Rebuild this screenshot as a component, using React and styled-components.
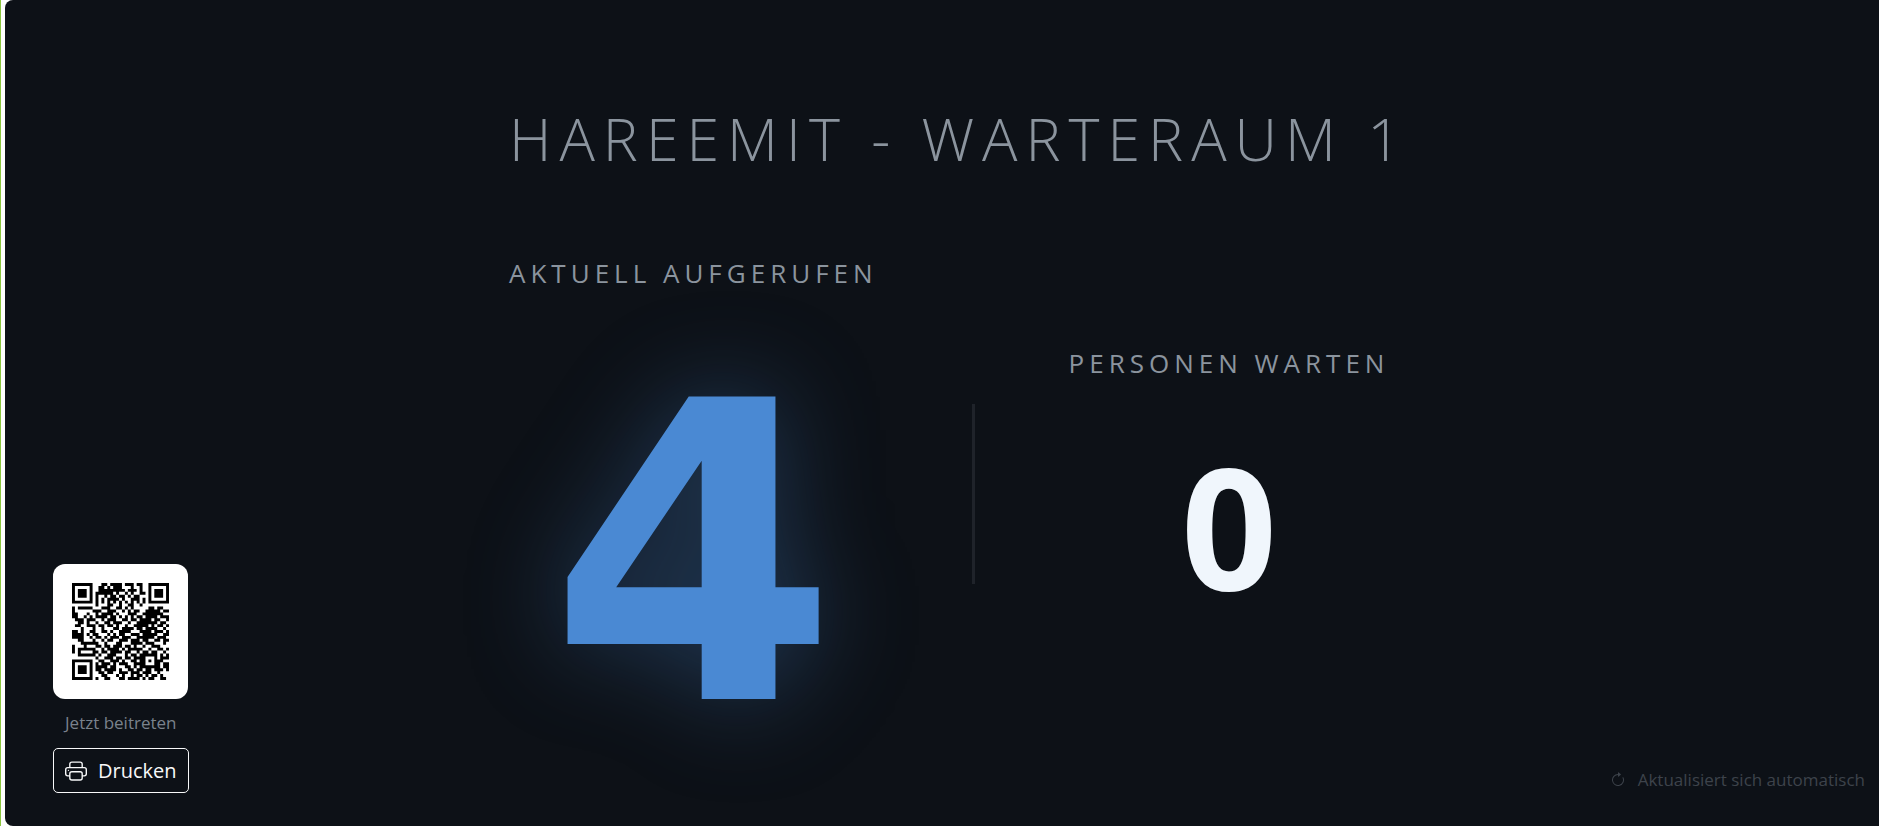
import React from "react";
import styled, { createGlobalStyle } from "styled-components";
import { BsArrowClockwise, BsPrinter } from "react-icons/bs";

const QR_ROWS = [
  "111111100011011110111011001111111",
  "100000100110101110001001001000001",
  "101110100111111111011101001011101",
  "101110101111110100101001101011101",
  "101110101001011011010110001011101",
  "100000101010111101001110101000001",
  "111111101010101010101010101111111",
  "000000001000110010011001000000000",
  "101111100011100110101000001101100",
  "100000011100111001010110011111011",
  "110001001011110100011100111111100",
  "110010101111011010101011011110111",
  "011101110010111001101101111011001",
  "001101001001101110010011111110110",
  "011001110110110100100111110101101",
  "000100010010001101111011011110010",
  "110100110011010011110001111011101",
  "111101011000101011001110111110011",
  "111100101101011101110011111101110",
  "001100010010110011101110110011011",
  "000111111001000110001111011100010",
  "100010001101101110110100100111000",
  "101111110010111101011111001001101",
  "101000011011011110110010110110010",
  "001111110100111000101101111110101",
  "000000001001110110110111100010111",
  "111111100110011101001101101011100",
  "100000101011101011100111100011011",
  "101110101111011000110101111111011",
  "101110101101111010011011011011101",
  "101110100110110011101110111001000",
  "100000100011000101001011010110100",
  "111111101001100011011110101100110",
];

const App = () => {
  const modules = QR_ROWS.flatMap((row, y) =>
    [...row].map((cell, x) => (cell === "1" ? `M${x} ${y}h1v1h-1z` : ""))
  ).join("");

  return (
    <Page>
      <GlobalStyle />
      <Screen>
        <JoinPanel>
          <QrCard>
            <svg viewBox="0 0 33 33" role="img" aria-label="QR-Code">
              <path d={modules} />
            </svg>
          </QrCard>
          <JoinText>Jetzt beitreten</JoinText>
          <PrintButton type="button" onClick={() => window.print()}>
            <BsPrinter size={22} />
            Drucken
          </PrintButton>
        </JoinPanel>

        <Main>
          <Title>Hareemit - Warteraum 1</Title>
          <Board>
            <Column>
              <Label>Aktuell aufgerufen</Label>
              <CurrentNumber>4</CurrentNumber>
            </Column>
            <Divider />
            <Column $low>
              <Label>Personen warten</Label>
              <WaitingNumber>0</WaitingNumber>
            </Column>
          </Board>
        </Main>

        <RefreshNote>
          <BsArrowClockwise size={16} />
          Aktualisiert sich automatisch
        </RefreshNote>
      </Screen>
    </Page>
  );
};

// Styled Components
const GlobalStyle = createGlobalStyle`
  * {
    box-sizing: border-box;
  }

  body {
    margin: 0;
    background: #ffffff;
    font-family: "Segoe UI", "Open Sans", "Noto Sans", sans-serif;
  }
`;

const Page = styled.div`
  display: flex;
  min-height: 100vh;
  padding-left: 4px;
  border-left: 1px solid #8cc63f;
`;

const Screen = styled.div`
  flex: 1;
  display: grid;
  grid-template-columns: 1fr auto 1fr;
  padding: 0 14px 33px 48px;
  border-radius: 8px 0 0 8px;
  background: #0d1117;
  color: #8b949e;
`;

const JoinPanel = styled.aside`
  display: flex;
  flex-direction: column;
  align-items: center;
  align-self: end;
  justify-self: start;
`;

const QrCard = styled.div`
  width: 135px;
  padding: 19px;
  border-radius: 12px;
  background: #ffffff;

  svg {
    display: block;
    width: 100%;
  }
`;

const JoinText = styled.p`
  margin: 0;
  padding: 11px 0 13px;
  font-size: 17px;
  line-height: 25px;
  color: #7a828c;
`;

const PrintButton = styled.button`
  display: flex;
  align-items: center;
  gap: 11px;
  height: 45px;
  padding: 0 11px;
  border: 1px solid #f8f9fa;
  border-radius: 5px;
  background: transparent;
  color: #f8f9fa;
  font-family: inherit;
  font-size: 20px;
  cursor: pointer;
`;

const Main = styled.main`
  display: flex;
  flex-direction: column;
  align-items: flex-start;
  padding-top: 96px;
`;

const Title = styled.h1`
  margin: 0;
  font-size: 59px;
  font-weight: 300;
  line-height: 84px;
  letter-spacing: 8px;
  text-transform: uppercase;
  white-space: nowrap;
`;

const Board = styled.div`
  display: flex;
  align-items: flex-start;
  gap: 94px;
  padding-top: 74px;
`;

const Column = styled.section`
  display: flex;
  flex-direction: column;
  align-items: center;
  padding-top: ${({ $low }) => ($low ? "90px" : "0")};
`;

const Label = styled.h2`
  margin: 0;
  font-size: 26px;
  font-weight: 400;
  line-height: 39px;
  letter-spacing: 5px;
  text-transform: uppercase;
  white-space: nowrap;
`;

const CurrentNumber = styled.div`
  margin-top: 51px;
  font-family: "DejaVu Sans", sans-serif;
  font-size: 415px;
  font-weight: 700;
  line-height: 423px;
  color: #4a89d3;
  text-shadow: 0 0 100px rgba(74, 137, 211, 0.35);
`;

const WaitingNumber = styled.div`
  margin-top: 58px;
  font-size: 168px;
  font-weight: 700;
  line-height: 168px;
  color: #f0f6fc;
`;

const Divider = styled.div`
  width: 3px;
  height: 180px;
  margin-top: 150px;
  background: #1f232a;
`;

const RefreshNote = styled.p`
  display: flex;
  align-items: center;
  gap: 12px;
  align-self: end;
  justify-self: end;
  margin: 0;
  font-size: 17px;
  line-height: 27px;
  color: #3d434b;
`;

export default App;
